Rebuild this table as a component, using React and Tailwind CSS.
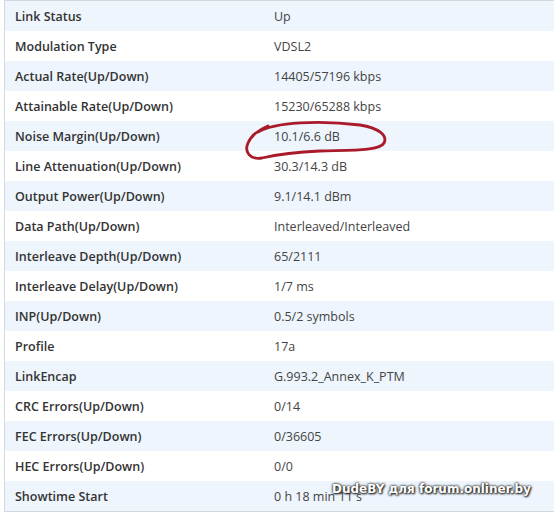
import React from "react";

const rows = [
  ["Link Status", "Up"],
  ["Modulation Type", "VDSL2"],
  ["Actual Rate(Up/Down)", "14405/57196 kbps"],
  ["Attainable Rate(Up/Down)", "15230/65288 kbps"],
  ["Noise Margin(Up/Down)", "10.1/6.6 dB"],
  ["Line Attenuation(Up/Down)", "30.3/14.3 dB"],
  ["Output Power(Up/Down)", "9.1/14.1 dBm"],
  ["Data Path(Up/Down)", "Interleaved/Interleaved"],
  ["Interleave Depth(Up/Down)", "65/2111"],
  ["Interleave Delay(Up/Down)", "1/7 ms"],
  ["INP(Up/Down)", "0.5/2 symbols"],
  ["Profile", "17a"],
  ["LinkEncap", "G.993.2_Annex_K_PTM"],
  ["CRC Errors(Up/Down)", "0/14"],
  ["FEC Errors(Up/Down)", "0/36605"],
  ["HEC Errors(Up/Down)", "0/0"],
  ["Showtime Start", "0 h 18 min 11 s"],
];

export default function App() {
  return (
    <div className="relative w-[554px] h-[512px] bg-white overflow-hidden" style={{ fontFamily: '"Open Sans", "Noto Sans", sans-serif' }}>
      <div className="ml-[4px] w-[550px] border-t border-b border-l border-[#d5d9de]">
        {rows.map(([k, v], i) => (
          <div key={k} className={`flex h-[30px] items-center pt-[2px] ${i % 2 === 0 ? "bg-[#eef5fc]" : "bg-white"}`}>
            <div className="w-[254px] pl-[10px] text-[12.5px] font-semibold text-[#333]">{k}</div>
            <div className="pl-[15px] text-[12.5px] text-[#444]">{v}</div>
          </div>
        ))}
      </div>
      <svg className="absolute left-0 top-0" width="554" height="512" viewBox="0 0 554 512">
        <path
          d="M258 132 C 275 122, 320 120, 360 125 C 378 128, 388 135, 384 143 C 380 151, 350 150, 320 151 C 295 152, 275 155, 262 158 C 250 160, 244 152, 248 143 C 251 136, 256 131, 268 126"
          fill="none"
          stroke="#a91b2a"
          strokeWidth="2.8"
          strokeLinecap="round"
        />
      </svg>
      <div
        className="absolute left-[332px] top-[480px] whitespace-nowrap text-[12px] font-bold text-white"
        style={{ fontFamily: '"DejaVu Sans", sans-serif', textShadow: "0 0 2px #222, 1px 1px 2px #222, 0 0 3px #333" }}
      >
        DudeBY для forum.onliner.by
      </div>
    </div>
  );
}
